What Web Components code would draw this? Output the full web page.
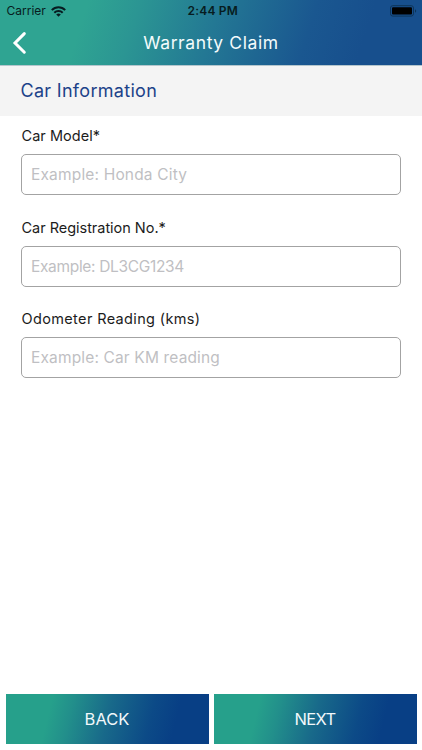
<!DOCTYPE html>
<html lang="en">
<head>
<meta charset="utf-8">
<title>Warranty Claim</title>
<style>
    body {
        margin: 0;
        background: #fff;
        font-family: Inter, "Liberation Sans", sans-serif;
    }
</style>
</head>
<body>
<claim-screen></claim-screen>
<script>
class StatusBar extends HTMLElement {
    connectedCallback() {
        this.attachShadow({ mode: 'open' });
        this.shadowRoot.innerHTML = `
            <style>
                :host {
                    display: grid;
                    grid-template-columns: 1fr auto 1fr;
                    align-items: center;
                    height: 22px;
                    padding: 0 5px 0 6.5px;
                    color: #071c20;
                    font-size: 12px;
                    line-height: 22px;
                }

                .carrier {
                    display: flex;
                    align-items: center;
                    gap: 5px;
                }

                .time {
                    font-weight: 600;
                    letter-spacing: 0.2px;
                    padding-left: 2px;
                }

                .battery {
                    justify-self: end;
                }

                svg {
                    display: block;
                }
            </style>
            <div class="carrier">
                <span>Carrier</span>
                <svg width="15" height="11" viewBox="0 0 15 11" fill="none" stroke="#071c20" stroke-width="2">
                    <path d="M0.8 4.1a9.3 9.3 0 0 1 13.4 0M3.3 6.7a5.9 5.9 0 0 1 8.4 0"/>
                    <path d="M7.5 10.7 5.2 8.6a3.3 3.3 0 0 1 4.6 0z" fill="#071c20" stroke="none"/>
                </svg>
            </div>
            <span class="time">2:44 PM</span>
            <svg class="battery" width="27" height="12" viewBox="0 0 27 12">
                <rect x="0.5" y="0.7" width="23" height="10.4" rx="2.3" fill="none" stroke="#0e3458"/>
                <rect x="2" y="2.3" width="20" height="7.2" rx="1" fill="#000"/>
                <path d="M25 4.2c1.6.5 1.6 3 0 3.5z" fill="#0e3458"/>
            </svg>
        `;
    }
}

class AppHeader extends HTMLElement {
    connectedCallback() {
        this.attachShadow({ mode: 'open' });
        this.shadowRoot.innerHTML = `
            <style>
                :host {
                    display: block;
                    height: 65px;
                    background: linear-gradient(108deg, #2fa492 0%, #2fa492 20%, #2b9593 32%, #237894 50%, #1a5790 72%, #174f8d 85%, #174f8d 100%);
                }

                .bar {
                    display: grid;
                    grid-template-columns: 40px 1fr 40px;
                    align-items: center;
                    height: 43px;
                }

                .title {
                    color: #f4fbfc;
                    font-size: 17.5px;
                    line-height: 40px;
                    text-align: center;
                    letter-spacing: var(--track, 0);
                    padding-bottom: 2px;
                }

                svg {
                    display: block;
                    margin: -1px 0 0 12px;
                }
            </style>
            <status-bar></status-bar>
            <div class="bar">
                <svg width="16" height="24" viewBox="0 0 16 24" fill="none" stroke="#fff" stroke-width="3" stroke-linecap="round">
                    <path d="M12.3 2.6 3 12l9.3 9.2"/>
                </svg>
                <div class="title"><slot></slot></div>
            </div>
        `;
    }
}

class SectionTitle extends HTMLElement {
    connectedCallback() {
        this.attachShadow({ mode: 'open' });
        this.shadowRoot.innerHTML = `
            <style>
                :host {
                    display: block;
                    height: 50px;
                    padding-left: 20.5px;
                    border-top: 1px solid #b4c6cd;
                    background: #f4f4f4;
                    color: #1c4289;
                    font-size: 18px;
                    line-height: 50px;
                    letter-spacing: var(--track, 0);
                }
            </style>
            <slot></slot>
        `;
    }
}

class FormField extends HTMLElement {
    connectedCallback() {
        this.attachShadow({ mode: 'open' });
        this.shadowRoot.innerHTML = `
            <style>
                :host {
                    display: block;
                }

                .label {
                    height: 38px;
                    padding-left: 0.5px;
                    color: #1c1c1c;
                    font-size: 14.5px;
                    line-height: 39px;
                    letter-spacing: var(--track, 0);
                }

                .box {
                    box-sizing: border-box;
                    height: 41px;
                    padding-left: 9px;
                    border: 1px solid #a3a3a3;
                    border-radius: 5px;
                    color: #bfbfc3;
                    font-size: 15.5px;
                    line-height: 39px;
                    letter-spacing: var(--hint-track, 0);
                }
            </style>
            <div class="label"><slot></slot></div>
            <div class="box"><slot name="hint"></slot></div>
        `;
    }
}

class GradientButton extends HTMLElement {
    connectedCallback() {
        this.attachShadow({ mode: 'open' });
        this.shadowRoot.innerHTML = `
            <style>
                :host {
                    display: block;
                    flex: 1;
                    height: 50.5px;
                    background: linear-gradient(104deg, #26a08b 0%, #26a08b 22%, #228f8b 32%, #18698a 50%, #0c4a87 70%, #083f85 82%, #083f85 100%);
                    color: #f2f8fb;
                    font-size: 16.5px;
                    line-height: 51px;
                    text-align: center;
                    cursor: pointer;
                    letter-spacing: var(--track, 0);
                }
            </style>
            <slot></slot>
        `;
    }
}

class ClaimScreen extends HTMLElement {
    connectedCallback() {
        this.attachShadow({ mode: 'open' });
        this.shadowRoot.innerHTML = `
            <style>
                :host {
                    display: flex;
                    flex-direction: column;
                    height: 750px;
                    overflow: hidden;
                }

                .form {
                    display: flex;
                    flex: 1;
                    flex-direction: column;
                    gap: 12.6px;
                    padding: 0 21px;
                }

                .actions {
                    display: flex;
                    gap: 5px;
                    padding: 0 5.5px 6px;
                }
            </style>
            <app-header style="--track: 0.6px">Warranty Claim</app-header>
            <section-title style="--track: 0.3px">Car Information</section-title>
            <div class="form">
                <form-field style="--track: 0.05px; --hint-track: 0.17px">Car Model*<span slot="hint">Example: Honda City</span></form-field>
                <form-field style="--track: -0.03px; --hint-track: -0.33px">Car Registration No.*<span slot="hint">Example: DL3CG1234</span></form-field>
                <form-field style="--track: 0.36px; --hint-track: 0.15px">Odometer Reading (kms)<span slot="hint">Example: Car KM reading</span></form-field>
            </div>
            <div class="actions">
                <gradient-button>BACK</gradient-button>
                <gradient-button style="--track: -0.7px">NEXT</gradient-button>
            </div>
        `;
    }
}

customElements.define('status-bar', StatusBar);
customElements.define('app-header', AppHeader);
customElements.define('section-title', SectionTitle);
customElements.define('form-field', FormField);
customElements.define('gradient-button', GradientButton);
customElements.define('claim-screen', ClaimScreen);
</script>
</body>
</html>
